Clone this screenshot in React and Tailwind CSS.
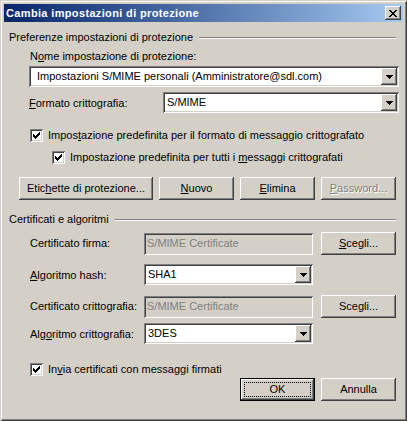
import React from 'react';

// classic win2k bevels
const RAISED = 'shadow-[inset_-1px_-1px_#404040,inset_1px_1px_#ffffff,inset_-2px_-2px_#808080,inset_2px_2px_#d4d0c8]';
const SUNKEN = 'shadow-[inset_1px_1px_#808080,inset_-1px_-1px_#ffffff,inset_2px_2px_#404040,inset_-2px_-2px_#d4d0c8]';

function Btn({ children, className = 'w-[75px]', disabled }) {
  return (
    <div className={`${className} h-[23px] shrink-0 flex items-center justify-center bg-[#d4d0c8] ${RAISED} ${disabled ? 'text-[#808080] [text-shadow:1px_1px_0_#ffffff]' : 'text-black'}`}>
      <span>{children}</span>
    </div>
  );
}

function DefaultBtn({ children }) {
  return (
    <div className="w-[75px] h-[23px] shrink-0 border border-black bg-[#d4d0c8] shadow-[inset_-1px_-1px_#404040,inset_1px_1px_#ffffff,inset_-2px_-2px_#808080]">
      <div className="m-[3px] h-[15px] border border-dotted border-black flex items-center justify-center">
        {children}
      </div>
    </div>
  );
}

function Arrow() {
  return (
    <div className={`w-[16px] h-[17px] bg-[#d4d0c8] ${RAISED} flex items-center justify-center`}>
      <svg width="7" height="4" viewBox="0 0 7 4" shapeRendering="crispEdges">
        <rect x="0" y="0" width="7" height="1" fill="#000" />
        <rect x="1" y="1" width="5" height="1" fill="#000" />
        <rect x="2" y="2" width="3" height="1" fill="#000" />
        <rect x="3" y="3" width="1" height="1" fill="#000" />
      </svg>
    </div>
  );
}

function Combo({ className, children, pad = 'pl-[2px]' }) {
  return (
    <div className={`${className} h-[21px] shrink-0 bg-white p-[2px] flex ${SUNKEN}`}>
      <div className={`flex-1 flex items-center ${pad} text-black whitespace-nowrap overflow-hidden`}>{children}</div>
      <Arrow />
    </div>
  );
}

function Edit({ children }) {
  return (
    <div className={`w-[169px] h-[22px] shrink-0 bg-[#d4d0c8] flex items-center pl-[3px] text-[#808080] ${SUNKEN}`}>
      {children}
    </div>
  );
}

function Check({ children }) {
  return (
    <div className="flex items-center h-[13px]">
      <div className={`w-[13px] h-[13px] bg-white shrink-0 ${SUNKEN} flex items-center justify-center`}>
        <svg width="7" height="7" viewBox="0 0 7 7" shapeRendering="crispEdges">
          <path d="M6 0h1v3h-1zM5 1h1v3h-1zM4 2h1v3h-1zM3 3h1v3h-1zM2 4h1v3h-1zM1 3h1v3h-1zM0 2h1v3h-1z" fill="#000" />
        </svg>
      </div>
      <span className="ml-[5px] whitespace-nowrap">{children}</span>
    </div>
  );
}

function Group({ children, className }) {
  return (
    <div className={`${className} h-[13px] flex items-center pl-[5px] pr-[7px]`}>
      <span className="whitespace-nowrap">{children}</span>
      <div className="flex-1 ml-[6px] h-[2px] border-t border-t-[#808080] border-b border-b-white" />
    </div>
  );
}

export default function App() {
  return (
    <div className="w-[407px] h-[421px] bg-[#d4d0c8] p-[4px] shadow-[inset_1px_1px_#d4d0c8,inset_-1px_-1px_#404040,inset_2px_2px_#ffffff,inset_-2px_-2px_#808080] font-['Liberation_Sans',Arial,sans-serif] text-[11px] leading-[13px] text-black select-none">
      {/* title bar */}
      <div className="h-[18px] flex items-center bg-linear-to-r from-[#0a246a] to-[#a6caf0]">
        <span className="flex-1 pl-[2px] text-white font-bold tracking-[0.35px]">Cambia impostazioni di protezione</span>
        <div className={`w-[16px] h-[14px] mr-[2px] bg-[#d4d0c8] ${RAISED} flex items-center justify-center`}>
          <svg width="8" height="7" viewBox="0 0 8 7" shapeRendering="crispEdges">
            <path d="M0 0h2v1h-2zM6 0h2v1h-2zM1 1h2v1h-2zM5 1h2v1h-2zM2 2h4v1h-4zM3 3h2v1h-2zM2 4h4v1h-4zM1 5h2v1h-2zM5 5h2v1h-2zM0 6h2v1h-2zM6 6h2v1h-2z" fill="#000" />
          </svg>
        </div>
      </div>

      <Group className="mt-[9px]">Preferenze impostazioni di protezione</Group>

      <div className="mt-[6px] pl-[26px] h-[13px]">
        N<u>o</u>me impostazione di protezione:
      </div>
      <div className="mt-[3px] pl-[25px]">
        <Combo className="w-[370px]" pad="pl-[6px]">Impostazioni S/MIME personali (Amministratore@sdl.com)</Combo>
      </div>

      <div className="mt-[5px] pl-[25px] flex items-center">
        <span className="w-[134px] shrink-0 pt-[2px]"><u>F</u>ormato crittografia:</span>
        <Combo className="w-[236px]">S/MIME</Combo>
      </div>

      <div className="mt-[16px] pl-[26px]">
        <Check>Impos<u>t</u>azione predefinita per il formato di messaggio crittografato</Check>
      </div>
      <div className="mt-[9px] pl-[48px]">
        <Check>Impostazione predefinita per tutti i <u>m</u>essaggi crittografati</Check>
      </div>

      <div className="mt-[13px] pl-[15px] flex gap-[6px]">
        <Btn className="w-[134px]">Etic<u>h</u>ette di protezione...</Btn>
        <Btn><u>N</u>uovo</Btn>
        <Btn><u>E</u>limina</Btn>
        <Btn disabled><u>P</u>assword...</Btn>
      </div>

      <Group className="mt-[13px]">Certificati e algoritmi</Group>

      <div className="mt-[6px] pl-[26px] flex items-center">
        <span className="w-[114px] shrink-0">Certificato firma:</span>
        <Edit>S/MIME Certificate</Edit>
        <div className="ml-[8px]"><Btn><u>S</u>cegli...</Btn></div>
      </div>

      <div className="mt-[9px] pl-[26px] flex items-center">
        <span className="w-[114px] shrink-0 pt-[2px]"><u>A</u>lgoritmo hash:</span>
        <Combo className="w-[169px]">SHA1</Combo>
      </div>

      <div className="mt-[10px] pl-[26px] flex items-center">
        <span className="w-[114px] shrink-0">Certificato crittografia:</span>
        <Edit>S/MIME Certificate</Edit>
        <div className="ml-[8px]"><Btn>Sce<u>g</u>li...</Btn></div>
      </div>

      <div className="mt-[5px] pl-[26px] flex items-center">
        <span className="w-[114px] shrink-0 pt-[2px]">Alg<u>o</u>ritmo crittografia:</span>
        <Combo className="w-[169px]">3DES</Combo>
      </div>

      <div className="mt-[19px] pl-[26px]">
        <Check>In<u>v</u>ia certificati con messaggi firmati</Check>
      </div>

      <div className="mt-[2px] pr-[7px] flex justify-end gap-[6px]">
        <DefaultBtn>OK</DefaultBtn>
        <Btn>Annulla</Btn>
      </div>
    </div>
  );
}
